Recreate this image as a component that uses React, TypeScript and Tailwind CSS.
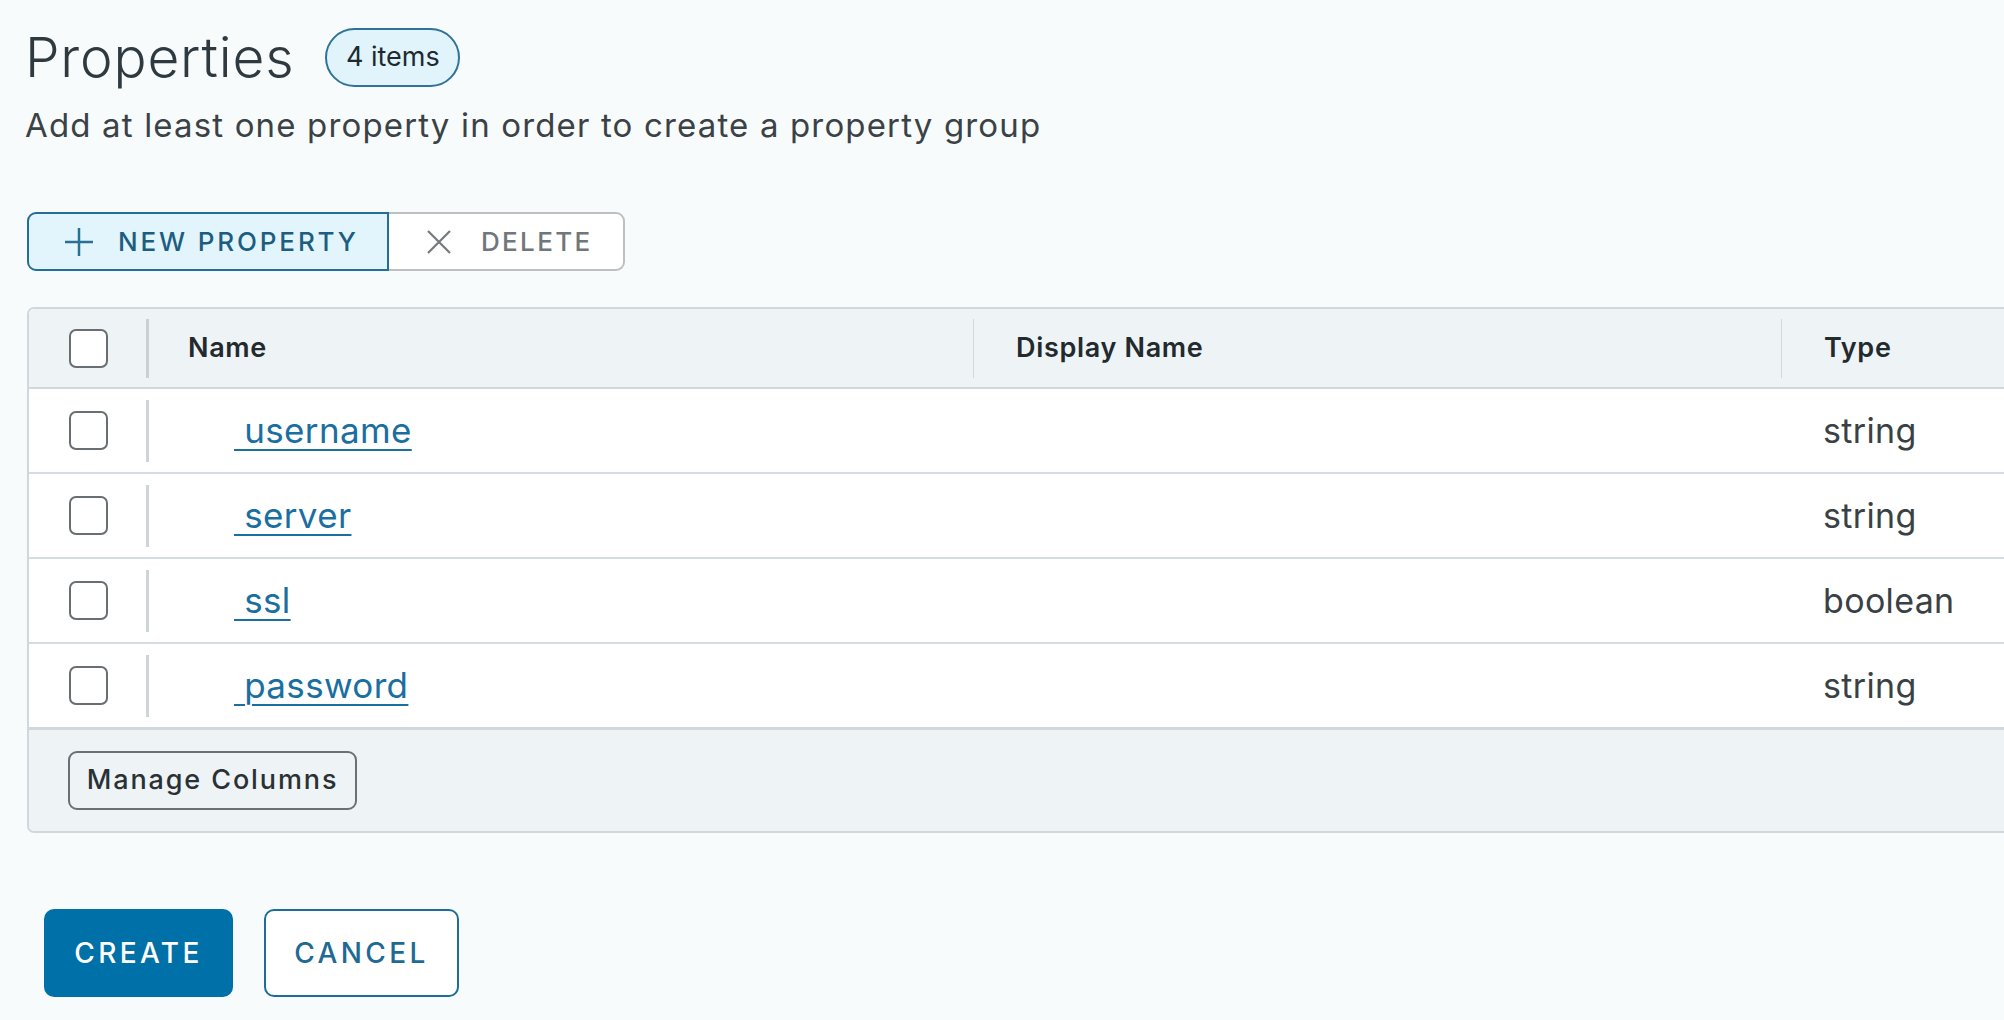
import React from "react";

const rows = [
  { name: "username", type: "string" },
  { name: "server", type: "string" },
  { name: "ssl", type: "boolean" },
  { name: "password", type: "string" },
];

function Checkbox() {
  return (
    <div className="h-[39px] w-[39px] rounded-[7px] border-2 border-[#686e72] bg-white" />
  );
}

function App() {
  return (
    <div className="h-screen w-full overflow-hidden bg-[#f8fbfc] pl-[27px] pt-[28px] font-['Inter',sans-serif] text-[#333]">
      {/* heading */}
      <div className="ml-[-2px] flex h-[59px] items-center">
        <h2 className="text-[55px] font-light leading-[59px] tracking-[0.015em] text-[#2f3a40]">Properties</h2>
        <span className="ml-[31px] flex h-[59px] w-[135px] items-center justify-center rounded-full border-2 border-[#2f7399] bg-[#e1f4fc] text-[27px] text-[#1f2a30]">
          4 items
        </span>
      </div>
      <p className="ml-[-2px] mt-[18px] text-[33px] leading-[40px] tracking-[0.035em] text-[#3b4246]">
        Add at least one property in order to create a property group
      </p>

      {/* toolbar */}
      <div className="mt-[67px] flex h-[59px] w-[598px]">
        <button className="flex w-[362px] items-center rounded-l-[9px] border-2 border-[#236e94] bg-[#e2f4fc] pl-[35px] text-[26px] font-medium tracking-[0.11em] text-[#1d5e80]">
          <svg width="30" height="30" viewBox="0 0 30 30" className="mr-[24px] shrink-0">
            <path d="M15 1v28M1 15h28" stroke="#2a6f94" strokeWidth="2.5" />
          </svg>
          NEW PROPERTY
        </button>
        <button className="flex flex-1 items-center rounded-r-[9px] border-2 border-l-0 border-[#bcc0c2] bg-white pl-[38px] text-[26px] font-medium tracking-[0.09em] text-[#707679]">
          <svg width="24" height="24" viewBox="0 0 24 24" className="mr-[30px] shrink-0">
            <path d="M1 1l22 22M23 1L1 23" stroke="#747a7d" strokeWidth="2.2" />
          </svg>
          DELETE
        </button>
      </div>

      {/* table */}
      <div className="mt-[36px] w-[2000px] overflow-hidden rounded-[7px] border-2 border-[#cfd8dc] bg-white">
        <div className="flex h-[80px] items-center border-b-2 border-[#cfd8dc] bg-[#eef3f6] text-[27px] font-semibold tracking-[0.025em] text-[#222a2e]">
          <div className="flex w-[117px] justify-center pl-[2px]">
            <Checkbox />
          </div>
          <div className="h-[59px] w-[3px] bg-[#c9d1d5]" />
          <div className="w-[824px] pl-[39px]">Name</div>
          <div className="h-[59px] w-px bg-[#d3dadd]" />
          <div className="w-[807px] pl-[42px]">Display Name</div>
          <div className="h-[59px] w-px bg-[#d3dadd]" />
          <div className="flex-1 pl-[42px]">Type</div>
        </div>
        {rows.map((r, i) => (
          <div
            key={r.name}
            className={
              i === rows.length - 1
                ? "flex h-[86px] items-center border-b-[3px] border-[#cfd8dc] text-[34px]"
                : "flex h-[85px] items-center border-b-2 border-[#d5dde0] text-[34px]"
            }
          >
            <div className="flex w-[117px] justify-center pl-[2px]">
              <Checkbox />
            </div>
            <div className="h-[62px] w-[3px] bg-[#cdd5d9]" />
            <div className="w-[824px] pl-[85px]">
              <a href="#" className="text-[35px] tracking-[0.01em] text-[#1a6fa0] underline decoration-2 underline-offset-[6px]">
                {"\u00a0" + r.name}
              </a>
            </div>
            <div className="w-[807px] pl-[42px]" />
            <div className="w-px" />
            <div className="flex-1 pl-[42px] tracking-[0.01em] text-[#3a4145]">{r.type}</div>
          </div>
        ))}
        <div className="h-[101px] bg-[#eef3f6] pl-[39px] pt-[21px]">
          <button className="h-[59px] w-[289px] rounded-[9px] border-2 border-[#6a7073] text-[27px] font-medium tracking-[0.07em] text-[#2a3135]">
            Manage Columns
          </button>
        </div>
      </div>

      {/* actions */}
      <div className="mt-[76px] flex gap-[31px] pl-[17px]">
        <button className="h-[88px] w-[189px] rounded-[10px] bg-[#0070a8] text-[28px] font-medium tracking-[0.12em] text-white">
          CREATE
        </button>
        <button className="h-[88px] w-[195px] rounded-[10px] border-2 border-[#1c6d97] bg-white text-[28px] font-medium tracking-[0.12em] text-[#1f6a92]">
          CANCEL
        </button>
      </div>
    </div>
  );
}

export default App;
